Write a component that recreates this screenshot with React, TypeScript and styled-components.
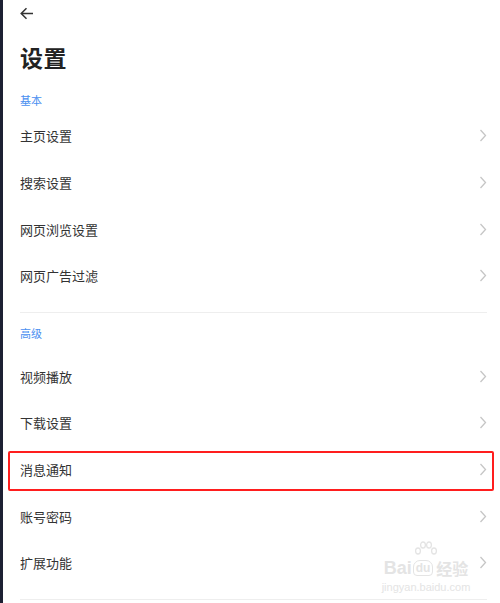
import React from 'react';
import styled, { createGlobalStyle } from 'styled-components';

const GlobalStyle = createGlobalStyle`
  html, body {
    margin: 0;
    padding: 0;
    background: #fff;
    font-family: "Noto Sans CJK SC", "Noto Sans", sans-serif;
  }
`;

const Screen = styled.div`
  width: 500px;
  height: 603px;
  overflow: hidden;
  display: flex;
  background: #fff;
`;

const Edge = styled.div`
  width: 3px;
  flex: none;
  background: #1d2033;
`;

const Content = styled.div`
  position: relative;
  flex: 1;
  padding: 0 13px 0 17px;
`;

const TopBar = styled.div`
  height: 27px;
  display: flex;
  align-items: center;
`;

const Title = styled.h1`
  margin: 0;
  height: 60px;
  display: flex;
  align-items: center;
  font-size: 23px;
  font-weight: 700;
  color: #222;
  letter-spacing: 0.5px;
`;

const SectionLabel = styled.div<{ $h: number }>`
  height: ${(p) => p.$h}px;
  display: flex;
  align-items: center;
  font-size: 11px;
  color: #4a8ff0;
`;

const Row = styled.div`
  position: relative;
  height: 46.67px;
  display: flex;
  align-items: center;
  justify-content: space-between;
  font-size: 13px;
  color: #333;
`;

const Divider = styled.div<{ $top: number }>`
  margin-top: ${(p) => p.$top}px;
  height: 1px;
  background: #eeeeee;
`;

const Highlight = styled.div`
  position: absolute;
  left: -12px;
  right: -7px;
  top: 5px;
  bottom: 2px;
  border: 2px solid #ff1e1e;
  border-radius: 2px;
  pointer-events: none;
`;

const Watermark = styled.div`
  position: absolute;
  left: 377px;
  top: 541px;
  width: 92px;
  display: flex;
  flex-direction: column;
  align-items: center;
  color: #e4e4e4;
  pointer-events: none;
`;

const MarkLine = styled.div`
  display: flex;
  align-items: center;
  font-family: "Liberation Sans", Arial, sans-serif;
  font-weight: 700;
  font-size: 18px;
  line-height: 18px;
`;

const DuBox = styled.span`
  border: 1.5px solid #e4e4e4;
  border-radius: 7px 7px 4px 4px;
  padding: 0 2px;
  margin: 0 3px 0 1px;
  font-size: 12px;
  line-height: 14px;
`;

const MarkCn = styled.span`
  font-family: "Noto Sans CJK SC", sans-serif;
  font-size: 16px;
`;

const MarkUrl = styled.div`
  font-family: "Liberation Sans", Arial, sans-serif;
  font-size: 11px;
  margin-top: 4px;
`;

const Chevron = () => (
  <svg width="8" height="13" viewBox="0 0 8 13" fill="none">
    <path d="M1.5 1 L6.5 6.5 L1.5 12" stroke="#c6c6c6" strokeWidth="1.3" />
  </svg>
);

const BackArrow = () => (
  <svg width="14" height="13" viewBox="0 0 14 13" fill="none">
    <path d="M13 6.5 H1.5 M6.5 1.2 L1.2 6.5 L6.5 11.8" stroke="#333" strokeWidth="1.5" />
  </svg>
);

const Paw = () => (
  <svg width="26" height="18" viewBox="0 0 26 18" fill="none" stroke="#e4e4e4" strokeWidth="1.3">
    <ellipse cx="5" cy="10" rx="2.4" ry="3" />
    <ellipse cx="10" cy="4" rx="2.4" ry="3" />
    <ellipse cx="16" cy="4" rx="2.4" ry="3" />
    <ellipse cx="21" cy="10" rx="2.4" ry="3" />
  </svg>
);

const basic = ['主页设置', '搜索设置', '网页浏览设置', '网页广告过滤'];
const advanced = ['视频播放', '下载设置', '消息通知', '账号密码', '扩展功能'];

const Item = ({ label, marked }: { label: string; marked?: boolean }) => (
  <Row>
    <span>{label}</span>
    <Chevron />
    {marked && <Highlight />}
  </Row>
);

export default function App() {
  return (
    <Screen>
      <GlobalStyle />
      <Edge />
      <Content>
        <TopBar>
          <BackArrow />
        </TopBar>
        <Title>设置</Title>
        <SectionLabel $h={25.67}>基本</SectionLabel>
        {basic.map((l) => (
          <Item key={l} label={l} />
        ))}
        <Divider $top={12.7} />
        <SectionLabel $h={40}>高级</SectionLabel>
        {advanced.map((l) => (
          <Item key={l} label={l} marked={l === '消息通知'} />
        ))}
        <Divider $top={13} />
        <Watermark>
          <Paw />
          <MarkLine>
            Bai<DuBox>du</DuBox>
            <MarkCn>经验</MarkCn>
          </MarkLine>
          <MarkUrl>jingyan.baidu.com</MarkUrl>
        </Watermark>
      </Content>
    </Screen>
  );
}
